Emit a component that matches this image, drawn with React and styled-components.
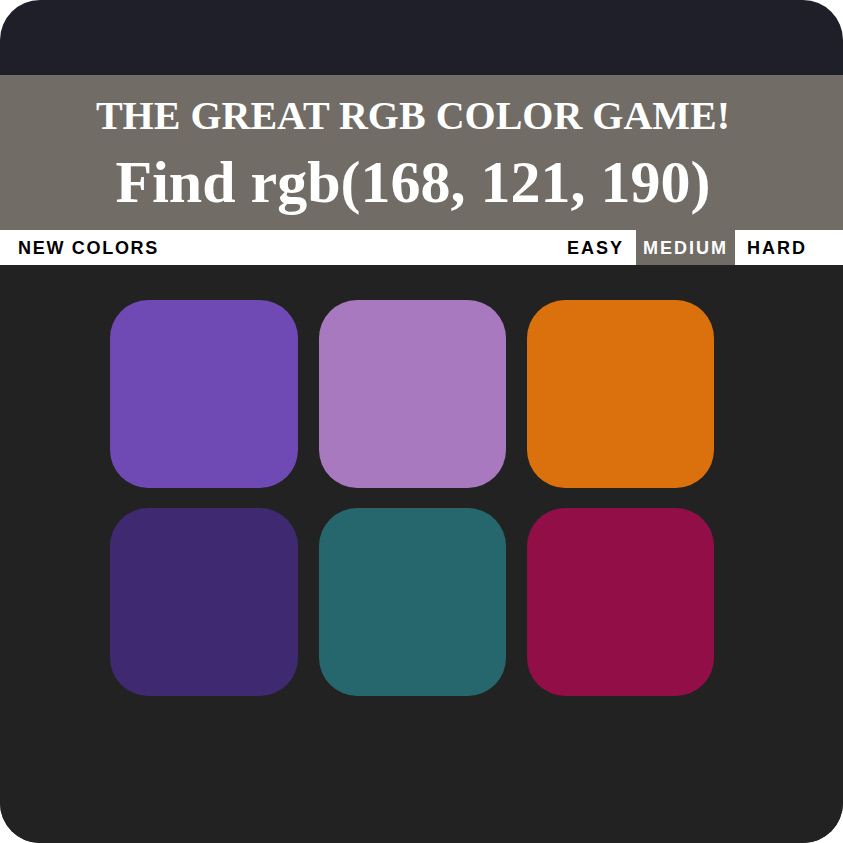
import styled, { createGlobalStyle } from "styled-components";

const GlobalStyle = createGlobalStyle`
  html, body {
    margin: 0;
    padding: 0;
    background: #ffffff;
  }
`;

const Frame = styled.div`
  width: 843px;
  height: 843px;
  border-radius: 40px;
  overflow: hidden;
  background: #1f1f29;
  padding-top: 75px;
  box-sizing: border-box;
  display: flex;
  flex-direction: column;
`;

const Header = styled.header`
  background: #716c66;
  color: #ffffff;
  text-align: center;
  padding: 18px 17px 5px 0;
  font-family: "Liberation Serif", "Times New Roman", serif;
  font-weight: 700;
`;

const Title = styled.h1`
  margin: 0;
  font-size: 40px;
  line-height: 46px;
  font-weight: 700;
  text-transform: uppercase;
`;

const Target = styled.div`
  font-size: 60px;
  line-height: 86px;
`;

const Stripe = styled.nav`
  background: #ffffff;
  height: 35px;
  display: flex;
  align-items: stretch;
  justify-content: space-between;
  padding: 0 29px 0 11px;
`;

const Group = styled.div`
  display: flex;
  gap: 5px;
`;

const Button = styled.button`
  border: none;
  margin: 0;
  padding: 1px 7px 0;
  height: 100%;
  background: ${({ $active }) => ($active ? "#716c66" : "transparent")};
  color: ${({ $active }) => ($active ? "#ffffff" : "#000000")};
  font-family: "Liberation Sans", Arial, sans-serif;
  font-weight: 700;
  font-size: 18px;
  letter-spacing: ${({ $tight }) => ($tight ? "1.7px" : "2px")};
  text-transform: uppercase;
  cursor: pointer;
`;

const Board = styled.main`
  flex: 1;
  background: #222222;
  padding: 35px 18.5px 0 0;
  display: grid;
  grid-template-columns: repeat(3, 187.5px);
  grid-auto-rows: 187.5px;
  gap: 20.8px;
  justify-content: center;
  align-content: start;
`;

const Square = styled.div`
  border-radius: 38px;
  background: ${({ $color }) => $color};
`;

const colors = [
  "rgb(112, 74, 180)",
  "rgb(168, 121, 190)",
  "rgb(218, 113, 12)",
  "rgb(63, 41, 112)",
  "rgb(37, 103, 109)",
  "rgb(145, 14, 71)",
];

export default function App() {
  return (
    <>
      <GlobalStyle />
      <Frame>
        <Header>
          <Title>The Great RGB Color Game!</Title>
          <Target>Find rgb(168, 121, 190)</Target>
        </Header>
        <Stripe>
          <Button $tight>New Colors</Button>
          <Group>
            <Button>Easy</Button>
            <Button $active>Medium</Button>
            <Button>Hard</Button>
          </Group>
        </Stripe>
        <Board>
          {colors.map((c) => (
            <Square key={c} $color={c} />
          ))}
        </Board>
      </Frame>
    </>
  );
}
